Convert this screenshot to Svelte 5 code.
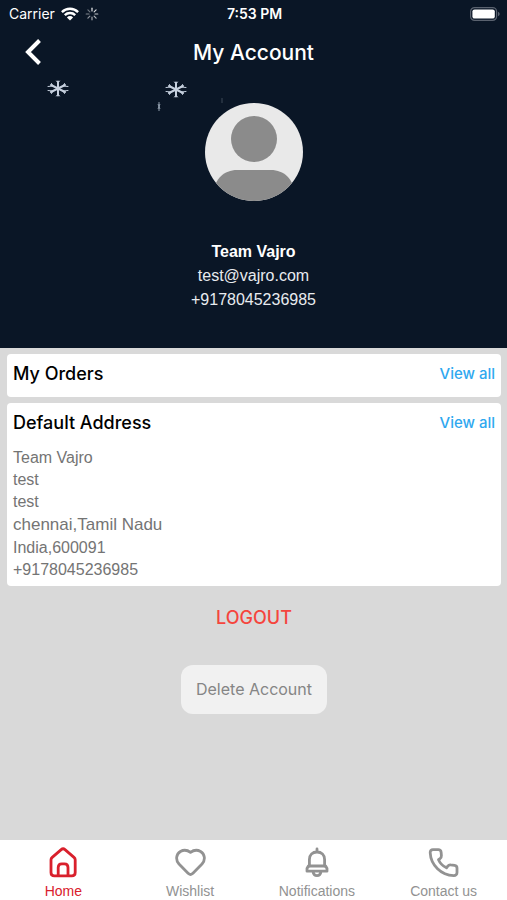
<script lang="ts">
	type Tab = { id: string; label: string };

	const user = {
		name: 'Team Vajro',
		email: 'test@vajro.com',
		phone: '+9178045236985'
	};

	const address = ['Team Vajro', 'test', 'test', 'chennai,Tamil Nadu', 'India,600091', '+9178045236985'];

	const tabs: Tab[] = [
		{ id: 'home', label: 'Home' },
		{ id: 'wishlist', label: 'Wishlist' },
		{ id: 'notifications', label: 'Notifications' },
		{ id: 'contact', label: 'Contact us' }
	];

	let active = $state('home');

	const spokes = [0, 45, 90, 135, 180, 225, 270, 315];
</script>

{#snippet flake()}
	<svg viewBox="0 0 24 20" width="24" height="20" fill="none" stroke="#c6d0de" stroke-linecap="round">
		<path stroke-width="2" d="M12 2.5v14M5 6l14 7M19 6L5 13" />
		<path stroke-width="1" d="M10.500 2L12 4l1.500-2M10.500 17l1.500-2 1.500 2M5.500 4.500L7 7 2 7.500M18.500 4.500L17 7l5 .5M5.500 14.500L7 12l-5-.5M18.500 14.500L17 12l5-.5" />
	</svg>
{/snippet}

<div class="screen">
	<header>
		<div class="status">
			<div class="carrier">
				<span>Carrier</span>
				<svg width="18" height="14" viewBox="0 0 18 14" aria-hidden="true">
					<g fill="none" stroke="#fff" stroke-width="2.4">
						<path d="M.9 5.1a11.6 11.6 0 0 1 16.2 0" />
						<path d="M3.8 8.2a7.4 7.4 0 0 1 10.4 0" />
					</g>
					<path fill="#fff" d="M9 13.6L5.9 10.4a4.4 4.4 0 0 1 6.2 0z" />
				</svg>
				<svg width="14" height="14" viewBox="0 0 14 14" aria-hidden="true">
					{#each spokes as angle, i}
						<path
							d="M7 1.2v2.8"
							stroke="#fff"
							stroke-width="1.2"
							stroke-linecap="round"
							opacity={0.9 - i * 0.07}
							transform="rotate({angle} 7 7)"
						/>
					{/each}
				</svg>
			</div>
			<span class="time">7:53 PM</span>
			<svg class="battery" width="30" height="14" viewBox="0 0 30 14" aria-hidden="true">
				<rect x=".6" y=".6" width="26" height="12.8" rx="4" fill="none" stroke="#5a626f" stroke-width="1.2" />
				<rect x="2.4" y="2.4" width="22.4" height="9.2" rx="2.2" fill="#fff" />
				<path d="M28 4.8c2.2.8 2.2 3.6 0 4.4z" fill="#5a626f" />
			</svg>
		</div>

		<div class="titlebar">
			<button type="button" class="back" aria-label="Back">
				<svg width="18" height="26" viewBox="0 0 18 26" fill="none" stroke="#fff" stroke-width="4">
					<path d="M15.5 1.5L4 13l11.5 11.5" />
				</svg>
			</button>
			<h1>My Account</h1>
		</div>

		<!-- falling snow -->
		<div class="snow" aria-hidden="true">
			<span class="flake" style="left: 46px; top: 79px">{@render flake()}</span>
			<span class="flake" style="left: 164px; top: 80px">{@render flake()}</span>
			<span class="flake" style="left: 156px; top: 101px">
				<svg width="6" height="11" viewBox="0 0 6 11" stroke="#8f9cab" fill="none">
					<path d="M3 1v9M2 3l2 5M4 3L2 8" />
				</svg>
			</span>
			<span class="flake" style="left: 220px; top: 98px">
				<svg width="4" height="6" viewBox="0 0 4 6" stroke="#3c4857" fill="none"><path d="M2 0v5" /></svg>
			</span>
		</div>

		<svg class="avatar" width="98" height="98" viewBox="0 0 98 98" role="img" aria-label="Profile picture">
			<clipPath id="avatar-clip"><circle cx="49" cy="49" r="49" /></clipPath>
			<g clip-path="url(#avatar-clip)">
				<rect width="98" height="98" fill="#e9e9e9" />
				<circle cx="49" cy="36" r="23" fill="#8b8b8b" />
				<path fill="#8b8b8b" d="M8 98V90C10 76 19 67 32 67h34c13 0 22 9 24 23v8z" />
			</g>
		</svg>

		<div class="profile">
			<strong>{user.name}</strong>
			<span>{user.email}</span>
			<span>{user.phone}</span>
		</div>
	</header>

	<main>
		<section class="card">
			<div class="card-head">
				<h2>My Orders</h2>
				<a href="#orders">View all</a>
			</div>
		</section>

		<section class="card">
			<div class="card-head">
				<h2>Default Address</h2>
				<a href="#addresses">View all</a>
			</div>
			<address>
				{#each address as line, i}
					<span class:city={i === 3}>{line}</span>
				{/each}
			</address>
		</section>

		<button type="button" class="logout">LOGOUT</button>
		<button type="button" class="delete">Delete Account</button>
	</main>

	<nav>
		{#each tabs as tab}
			<button type="button" class="tab" class:active={active === tab.id} onclick={() => (active = tab.id)}>
				<svg
					width="32"
					height="32"
					viewBox="0 0 32 32"
					fill="none"
					stroke="currentColor"
					stroke-width="2.8"
					stroke-linecap="round"
					stroke-linejoin="round"
					aria-hidden="true"
				>
					{#if tab.id === 'home'}
						<path d="M4 12.8c0-1 .4-1.7 1.2-2.4l9-7.8c1.2-1 2.6-1 3.800 0l9 7.800c.8.7 1.200 1.400 1.200 2.400v12.600c0 2.200-1.200 3.400-3.400 3.400H7.400c-2.200 0-3.400-1.200-3.400-3.400z" />
						<path d="M11.200 28.600v-8c0-2.400 1.400-3.800 3.600-3.800h2.600c2.200 0 3.600 1.400 3.600 3.800v8" />
					{:else if tab.id === 'wishlist'}
						<path d="M16.500 27.500c-1 0-1.500-.5-2.200-1.100L5 17C1.300 13 2.100 7 6.400 4.500c3.500-2 7.500-1.100 10.100.9 2.600-2 6.600-2.900 10.100-.9 4.300 2.500 5.100 8.500 1.400 12.500l-9.300 9.400c-.7.6-1.200 1.100-2.200 1.100z" />
					{:else if tab.id === 'notifications'}
						<path d="M16 2v3M8.400 19v-6.500C8.400 8 11.600 5 16 5s7.600 3 7.600 7.500V19" />
						<path d="M7.400 19h17.200l1.400 2.500v2.700H6v-2.700zM12 24.500c.4 2.700 1.900 4.100 4 4.100s3.600-1.400 4-4.100" />
					{:else}
						<path d="M5 2.700h5.200c1.700 0 2.700 1 2.900 2.500l.3 3.500c.1 1.300-.3 2-1.400 2.900l-1.500 1.100c1.600 3.600 4.300 6.300 8 8.100l1.300-1.700c.8-1 1.600-1.400 2.800-1.200l4 .5c1.500.2 2.400 1.200 2.400 2.700v4.300c0 2-1.300 3.300-3.300 3.200C13.200 28.200 2.800 18.300 2.200 5.800 2.100 3.900 3.100 2.700 5 2.700z" />
					{/if}
				</svg>
				<span>{tab.label}</span>
			</button>
		{/each}
	</nav>
</div>

<style>
	:global(body) {
		margin: 0;
		background: #d9d9d9;
	}

	.screen {
		display: flex;
		flex-direction: column;
		min-height: 100vh;
		font-family: 'Liberation Sans', Arial, sans-serif;
		font-size: 16px;
	}

	button {
		border: 0;
		padding: 0;
		background: none;
		font: inherit;
		cursor: pointer;
	}

	svg {
		display: block;
	}

	header {
		position: relative;
		display: flex;
		flex-direction: column;
		align-items: center;
		padding-bottom: 36px;
		background: #0a1626;
		color: #fff;
	}

	.status {
		box-sizing: border-box;
		display: grid;
		grid-template-columns: 1fr auto 1fr;
		align-items: center;
		width: 100%;
		height: 27px;
		padding: 0 7px 0 9px;
		font-family: Inter, sans-serif;
		font-size: 14px;
	}

	.carrier {
		display: flex;
		align-items: center;
		gap: 6px;
	}

	.time {
		font-weight: 600;
	}

	.battery {
		justify-self: end;
	}

	.titlebar {
		display: grid;
		grid-template-columns: 1fr auto 1fr;
		align-items: center;
		width: 100%;
		height: 50px;
	}

	.back {
		justify-self: start;
		margin-left: 24px;
	}

	h1 {
		margin: 0;
		font-family: Inter, sans-serif;
		font-size: 21px;
		font-weight: 500;
	}

	.flake {
		position: absolute;
	}

	.avatar {
		margin-top: 26px;
	}

	.profile {
		display: flex;
		flex-direction: column;
		align-items: center;
		margin-top: 39px;
		line-height: 24px;
	}

	.profile strong {
		font-weight: 700;
	}

	.profile span {
		color: #e8ebef;
	}

	main {
		flex: 1;
		display: flex;
		flex-direction: column;
		align-items: center;
		padding: 6px 6px 24px 7px;
		background: #d9d9d9;
	}

	.card {
		box-sizing: border-box;
		width: 100%;
		margin-bottom: 6px;
		padding: 0 6px;
		border-radius: 4px;
		background: #fff;
	}

	.card-head {
		display: flex;
		align-items: center;
		justify-content: space-between;
		padding-bottom: 3px;
		font-family: Inter, sans-serif;
		font-weight: 500;
		line-height: 40px;
	}

	h2 {
		margin: 0;
		font-size: 18px;
		font-weight: 500;
		color: #000;
	}

	.card-head a {
		font-size: 15px;
		color: #2fa8ef;
		text-decoration: none;
	}

	address {
		display: flex;
		flex-direction: column;
		padding: 1px 0 5px;
		font-style: normal;
		line-height: 22px;
		color: #747474;
	}

	.city {
		font-size: 17px;
		line-height: 24px;
	}

	.logout {
		margin-top: 12px;
		font-family: Inter, sans-serif;
		font-size: 18px;
		font-weight: 500;
		line-height: 28px;
		color: #f5453d;
	}

	.delete {
		margin-top: 33px;
		padding: 0 15px;
		border-radius: 12px;
		background: #f1f1f1;
		font-family: Inter, sans-serif;
		font-size: 16px;
		line-height: 49px;
		color: #858585;
	}

	nav {
		display: grid;
		grid-template-columns: repeat(4, 1fr);
		height: 60px;
		background: #fff;
	}

	.tab {
		display: flex;
		flex-direction: column;
		align-items: center;
		gap: 4px;
		padding-top: 7px;
		font-size: 14px;
		line-height: 16px;
		color: #929292;
	}

	.tab.active {
		color: #d9202c;
	}
</style>
